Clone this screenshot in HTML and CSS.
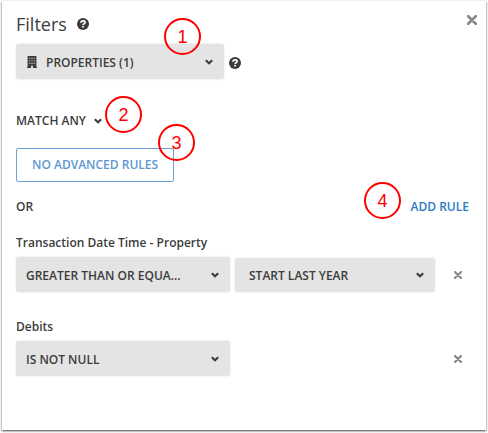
FILE: index.html
```html
<!DOCTYPE html>
<html lang="en">
<head>
    <meta charset="UTF-8">
    <meta name="viewport" content="width=device-width, initial-scale=1.0">
    <title>Filters</title>
    <link rel="stylesheet" href="styles.css">
</head>
<body>
    <!-- Shared icons -->
    <svg class="icon-defs" aria-hidden="true">
        <symbol id="icon-help" viewBox="0 0 12 12">
            <circle cx="6" cy="6" r="6" fill="currentColor"/>
            <path d="M3.9 4.7C4 3.3 5 2.8 6.1 2.8C7.3 2.8 8.1 3.5 8.1 4.4C8.1 5.7 6.1 5.6 6.1 7.1" fill="none" stroke="#fff" stroke-width="1.7"/>
            <rect x="5.2" y="7.9" width="1.8" height="1.6" fill="#fff"/>
        </symbol>
        <symbol id="icon-chevron" viewBox="0 0 8 6">
            <path d="M0.8 1.2L4 4.3L7.2 1.2" fill="none" stroke="currentColor" stroke-width="2.1"/>
        </symbol>
        <symbol id="icon-close" viewBox="0 0 10 10">
            <path d="M1.2 1.2L8.8 8.8M8.8 1.2L1.2 8.8" fill="none" stroke="currentColor" stroke-width="2.7" stroke-linecap="round"/>
        </symbol>
        <symbol id="icon-building" viewBox="0 0 10 12">
            <path fill="currentColor" fill-rule="evenodd" d="M0.6 0H9.4V11H10V12H6V9.8H4V12H0V11H0.6ZM2.3 1.7V2.8H3.3V1.7ZM4.5 1.7V2.8H5.5V1.7ZM6.7 1.7V2.8H7.7V1.7ZM2.3 4.2V5.3H3.3V4.2ZM4.5 4.2V5.3H5.5V4.2ZM6.7 4.2V5.3H7.7V4.2ZM2.3 6.8V7.9H3.3V6.8ZM4.5 6.8V7.9H5.5V6.8ZM6.7 6.8V7.9H7.7V6.8Z"/>
        </symbol>
    </svg>

    <main class="panel">
        <header class="panel-header">
            <h1>Filters</h1>
            <button type="button" class="icon-button" aria-label="About filters"><svg class="help"><use href="#icon-help"/></svg></button>
            <button type="button" class="icon-button close-panel" aria-label="Close"><svg class="close"><use href="#icon-close"/></svg></button>
        </header>

        <div class="properties">
            <div class="dropdown dropdown-properties">
                <svg class="building"><use href="#icon-building"/></svg>
                <select aria-label="Properties">
                    <option>PROPERTIES (1)</option>
                </select>
                <svg class="chevron"><use href="#icon-chevron"/></svg>
                <span class="callout callout-1">1</span>
            </div>
            <button type="button" class="icon-button" aria-label="About properties"><svg class="help"><use href="#icon-help"/></svg></button>
        </div>

        <div class="match">
            <button type="button" class="match-button">MATCH ANY <svg class="chevron"><use href="#icon-chevron"/></svg></button>
            <span class="callout callout-2">2</span>
        </div>

        <div class="advanced">
            <button type="button" class="outline-button">NO ADVANCED RULES</button>
            <span class="callout callout-3">3</span>
        </div>

        <div class="group-row">
            <span>OR</span>
            <div class="add-rule">
                <a href="#">ADD RULE</a>
                <span class="callout callout-4">4</span>
            </div>
        </div>

        <section class="rule">
            <label for="dateOperator">Transaction Date Time - Property</label>
            <div class="rule-fields">
                <div class="dropdown">
                    <select id="dateOperator">
                        <option>GREATER THAN OR EQUA...</option>
                    </select>
                    <svg class="chevron"><use href="#icon-chevron"/></svg>
                </div>
                <div class="dropdown dropdown-value">
                    <select aria-label="Date value">
                        <option>START LAST YEAR</option>
                    </select>
                    <svg class="chevron"><use href="#icon-chevron"/></svg>
                </div>
                <button type="button" class="icon-button" aria-label="Remove rule"><svg class="remove"><use href="#icon-close"/></svg></button>
            </div>
        </section>

        <section class="rule">
            <label for="debitsOperator">Debits</label>
            <div class="rule-fields">
                <div class="dropdown">
                    <select id="debitsOperator">
                        <option>IS NOT NULL</option>
                    </select>
                    <svg class="chevron"><use href="#icon-chevron"/></svg>
                </div>
                <button type="button" class="icon-button" aria-label="Remove rule"><svg class="remove"><use href="#icon-close"/></svg></button>
            </div>
        </section>
    </main>
</body>
</html>
```

FILE: styles.css
```css
* {
    box-sizing: border-box;
}

body {
    margin: 0;
    padding: 1px 2px 3px;
    background: #fff;
    color: #3c3c3c;
    font-family: 'Open Sans', sans-serif;
    font-size: 12px;
    font-weight: 600;
    line-height: 20px;
}

/* Form controls take the page font */
button, select {
    font: inherit;
    color: inherit;
}

button {
    padding: 0;
    border: none;
    background: none;
    cursor: pointer;
}

svg {
    display: block;
    flex: none;
}

.icon-defs {
    position: absolute;
    width: 0;
    height: 0;
}

/* Panel */
.panel {
    padding: 9px 14px 54px;
    background: #fff;
    box-shadow: 0 1px 2px rgba(0, 0, 0, 0.75);
}

.panel-header {
    display: flex;
    align-items: center;
    gap: 10px;
    margin-bottom: 6px;
}

h1 {
    margin: 0;
    font-size: 18px;
    font-weight: 400;
    line-height: 28px;
}

.close-panel {
    margin: 0 -5px 8px auto;
}

/* Icons */
.help {
    width: 12px;
    height: 12px;
}

.close {
    width: 10px;
    height: 10px;
    color: #888;
}

.remove {
    width: 8px;
    height: 8px;
    color: #888;
}

.chevron {
    width: 8px;
    height: 6px;
}

.building {
    width: 10px;
    height: 12px;
}

/* Dropdowns */
.dropdown {
    position: relative;
    display: flex;
    align-items: center;
    flex: 0 1 214px;
    min-width: 0;
    height: 35px;
    border-radius: 3px;
    background: #e4e4e4;
    box-shadow: 0 0 2px rgba(0, 0, 0, 0.15);
}

.dropdown select {
    appearance: none;
    width: 100%;
    height: 100%;
    padding: 2px 30px 0 10px;
    border: none;
    background: transparent;
    cursor: pointer;
}

.dropdown .chevron,
.dropdown .building {
    position: absolute;
    pointer-events: none;
}

.dropdown .chevron {
    right: 11px;
}

.dropdown .building {
    left: 11px;
}

.dropdown-properties {
    flex-basis: 208px;
}

.dropdown-properties select {
    padding-left: 30px;
}

.dropdown-value {
    flex-basis: 200px;
    height: 34px;
}

.dropdown-value select {
    padding-left: 14px;
}

.properties {
    display: flex;
    align-items: center;
    gap: 5px;
}

.properties .icon-button {
    margin-top: 3px;
}

/* Match mode */
.match {
    position: relative;
    margin-top: 32px;
}

.match-button {
    display: flex;
    align-items: center;
    gap: 8px;
}

.advanced {
    position: relative;
    margin-top: 17px;
}

.outline-button {
    display: block;
    padding: 6px 15px;
    border: 1px solid #6ba3d8;
    border-radius: 2px;
    color: #5b98d2;
}

.group-row {
    display: flex;
    justify-content: space-between;
    margin-top: 15px;
}

.add-rule {
    position: relative;
    margin-right: 3px;
}

.add-rule a {
    color: #2b7bc3;
    text-decoration: none;
}

/* Rules */
.rule {
    margin-top: 16px;
}

.rule + .rule {
    margin-top: 25px;
}

.rule label {
    display: block;
    margin-bottom: 4px;
}

.rule-fields {
    display: flex;
    align-items: center;
    gap: 5px;
}

.rule-fields .icon-button {
    margin: 0 10px 0 auto;
}

/* Numbered callouts */
.callout {
    position: absolute;
    width: 37px;
    height: 37px;
    border: 2px solid #f00;
    border-radius: 50%;
    color: #f00;
    font-family: 'Liberation Sans', sans-serif;
    font-size: 18px;
    font-weight: 400;
    line-height: 34px;
    text-align: center;
    pointer-events: none;
}

.callout-1 {
    top: -26px;
    left: 148px;
}

.callout-2 {
    top: -15px;
    left: 89px;
}

.callout-3 {
    top: -24px;
    left: 142px;
}

.callout-4 {
    top: -15px;
    right: 68px;
}
```
